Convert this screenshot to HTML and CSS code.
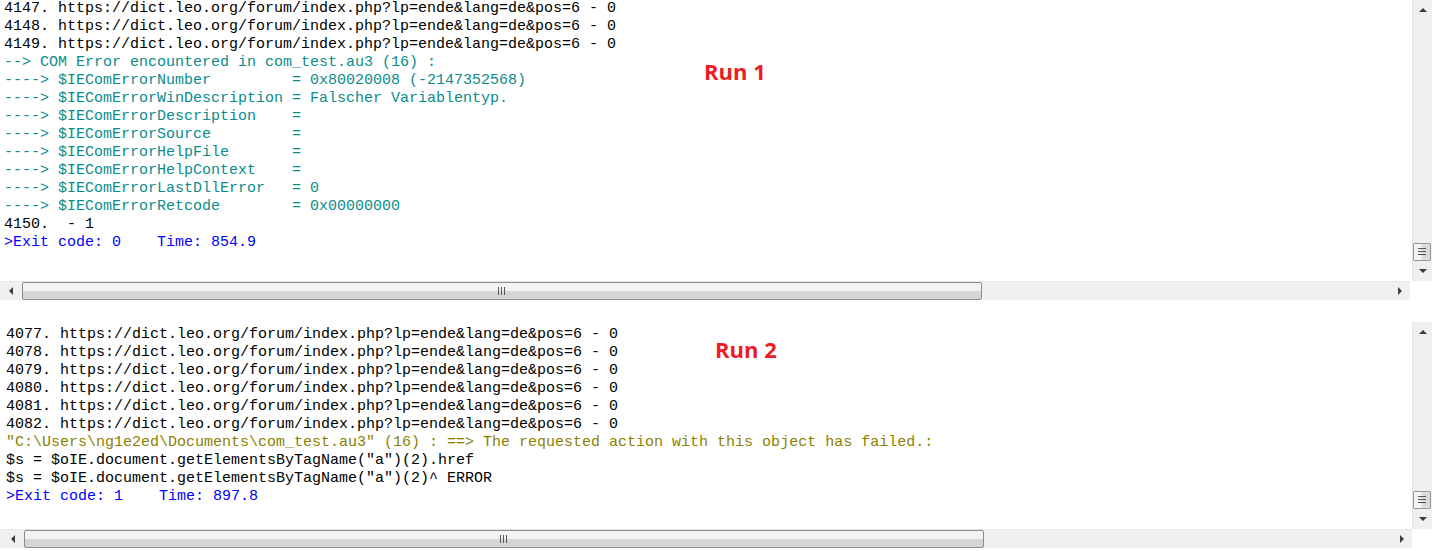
FILE: index.html
```html
<!DOCTYPE html>
<html lang="en">
<head>
  <meta charset="UTF-8">
  <title>SciTE output</title>
  <link rel="stylesheet" href="styles.css">
</head>
<body>
  <div class="pane pane-top">
    <pre class="output"><span>4147. https://dict.leo.org/forum/index.php?lp=ende&amp;lang=de&amp;pos=6 - 0</span>
<span>4148. https://dict.leo.org/forum/index.php?lp=ende&amp;lang=de&amp;pos=6 - 0</span>
<span>4149. https://dict.leo.org/forum/index.php?lp=ende&amp;lang=de&amp;pos=6 - 0</span>
<span class="com">--&gt; COM Error encountered in com_test.au3 (16) :</span>
<span class="com">----&gt; $IEComErrorNumber         = 0x80020008 (-2147352568)</span>
<span class="com">----&gt; $IEComErrorWinDescription = Falscher Variablentyp.</span>
<span class="com">----&gt; $IEComErrorDescription    =</span>
<span class="com">----&gt; $IEComErrorSource         =</span>
<span class="com">----&gt; $IEComErrorHelpFile       =</span>
<span class="com">----&gt; $IEComErrorHelpContext    =</span>
<span class="com">----&gt; $IEComErrorLastDllError   = 0</span>
<span class="com">----&gt; $IEComErrorRetcode        = 0x00000000</span>
<span>4150.  - 1</span>
<span class="exit">&gt;Exit code: 0    Time: 854.9</span></pre>
    <div class="vscroll">
      <div class="arrow"><i class="tri up"></i></div>
      <div class="track"></div>
      <div class="vthumb"><i class="vgrip"></i></div>
      <div class="arrow"><i class="tri down"></i></div>
    </div>
    <div class="hscroll">
      <div class="arrow harrow"><i class="tri left"></i></div>
      <div class="hthumb"><i class="hgrip"></i></div>
      <div class="track"></div>
      <div class="arrow harrow"><i class="tri right"></i></div>
    </div>
    <div class="label label-1">Run 1</div>
  </div>

  <div class="pane pane-bottom">
    <pre class="output"><span>4077. https://dict.leo.org/forum/index.php?lp=ende&amp;lang=de&amp;pos=6 - 0</span>
<span>4078. https://dict.leo.org/forum/index.php?lp=ende&amp;lang=de&amp;pos=6 - 0</span>
<span>4079. https://dict.leo.org/forum/index.php?lp=ende&amp;lang=de&amp;pos=6 - 0</span>
<span>4080. https://dict.leo.org/forum/index.php?lp=ende&amp;lang=de&amp;pos=6 - 0</span>
<span>4081. https://dict.leo.org/forum/index.php?lp=ende&amp;lang=de&amp;pos=6 - 0</span>
<span>4082. https://dict.leo.org/forum/index.php?lp=ende&amp;lang=de&amp;pos=6 - 0</span>
<span class="err">"C:\Users\ng1e2ed\Documents\com_test.au3" (16) : ==&gt; The requested action with this object has failed.:</span>
<span>$s = $oIE.document.getElementsByTagName("a")(2).href</span>
<span>$s = $oIE.document.getElementsByTagName("a")(2)^ ERROR</span>
<span class="exit">&gt;Exit code: 1    Time: 897.8</span></pre>
    <div class="vscroll">
      <div class="arrow"><i class="tri up"></i></div>
      <div class="track"></div>
      <div class="vthumb"><i class="vgrip"></i></div>
      <div class="arrow"><i class="tri down"></i></div>
    </div>
    <div class="hscroll">
      <div class="arrow harrow"><i class="tri left"></i></div>
      <div class="hthumb"><i class="hgrip"></i></div>
      <div class="track"></div>
      <div class="arrow harrow"><i class="tri right"></i></div>
    </div>
    <div class="label label-2">Run 2</div>
  </div>
</body>
</html>
```
FILE: styles.css
```css
body {
  margin: 0;
  background: #fff;
  font-family: "Liberation Mono", monospace;
}
.pane {
  position: relative;
  display: grid;
  grid-template-columns: 1fr 20px;
}
.pane-top {
  grid-template-rows: 281px 19px;
}
.pane-bottom {
  margin-top: 22px;
  grid-template-rows: 207px 19px;
}
.output {
  margin: 0;
  padding: 0 0 0 4px;
  overflow: hidden;
  white-space: pre;
  font: 15px/18px "Liberation Mono", "Courier New", monospace;
  color: #000;
}
.pane-bottom .output {
  padding: 4px 0 0 6px;
}
.output .com {
  color: #0b8c8c;
}
.output .err {
  color: #8c7f00;
}
.output .exit {
  color: #0000ff;
}

/* scrollbars */
.vscroll {
  display: flex;
  flex-direction: column;
  background: #efefef;
  border-left: 1px solid #e4e4e4;
}
.vscroll .arrow {
  height: 20px;
}
.track {
  flex: 1;
}
.arrow {
  display: flex;
  align-items: center;
  justify-content: center;
  flex: none;
}
.harrow {
  width: 20px;
}
.hscroll .harrow:first-child {
  width: 22px;
}
.tri {
  width: 0;
  height: 0;
  border: 4px solid transparent;
}
.tri.up {
  border-top: 0;
  border-bottom-color: #3c3c3c;
}
.tri.down {
  border-bottom: 0;
  border-top-color: #3c3c3c;
}
.tri.left {
  border-left: 0;
  border-right-color: #3c3c3c;
}
.tri.right {
  border-right: 0;
  border-left-color: #3c3c3c;
}
.vthumb {
  height: 18px;
  margin: 0 1px 0 0;
  border: 1px solid #969696;
  border-radius: 2px;
  background: linear-gradient(to right, #f4f4f4 45%, #dadada 55%);
  display: flex;
  align-items: center;
  justify-content: center;
  box-sizing: border-box;
}
.vgrip {
  width: 8px;
  height: 9px;
  background: repeating-linear-gradient(to bottom, #555 0 1px, transparent 1px 3px);
}
.hscroll {
  display: flex;
  margin-right: 2px;
  background: #f0f0f0;
  border-top: 1px solid #e6e6e6;
}
.pane-bottom .hscroll {
  margin-right: 0;
  padding-left: 2px;
}
.hthumb {
  width: 960px;
  flex: none;
  border: 1px solid #8e8e8e;
  border-radius: 2px;
  background: linear-gradient(to bottom, #f3f3f3 45%, #d5d5d5 55%);
  display: flex;
  align-items: center;
  justify-content: center;
  box-sizing: border-box;
}
.hgrip {
  width: 9px;
  height: 8px;
  background: repeating-linear-gradient(to right, #555 0 1px, transparent 1px 3px);
}

/* annotations over the output */
.label {
  position: absolute;
  font: bold 22px/22px "Open Sans", sans-serif;
  color: #ed1c24;
}
.label-1 {
  left: 704px;
  top: 60px;
}
.label-2 {
  left: 715px;
  top: 16px;
}
```
